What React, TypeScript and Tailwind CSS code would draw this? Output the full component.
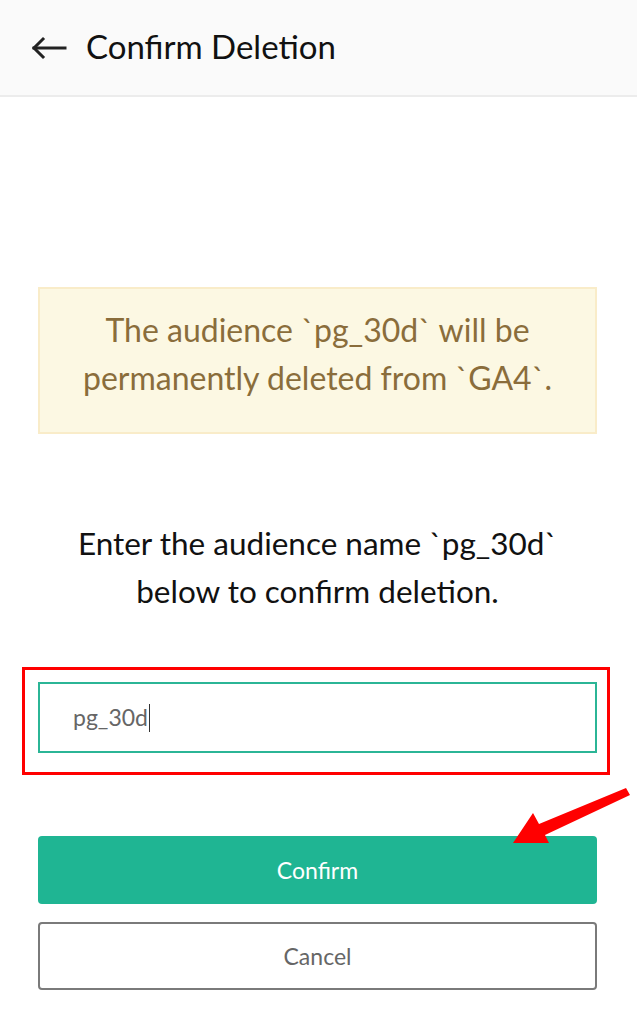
import React from "react";

export default function App() {
  return (
    <div className="relative min-h-[1024px] w-[637px] bg-white" style={{ fontFamily: "Lato, 'Noto Sans', sans-serif" }}>
      <header className="flex h-[97px] items-center border-b-2 border-[#ececec] bg-[#fafafa] pl-[31px]">
        <svg width="36" height="24" viewBox="0 0 36 24" className="mr-[19px]" fill="none" stroke="#222" strokeWidth="3" strokeLinecap="square">
          <path d="M3 12 H34" />
          <path d="M12 3 L3 12 L12 21" strokeLinejoin="miter" />
        </svg>
        <h1 className="mt-[-2px] text-[33px] leading-none text-[#111]">Confirm Deletion</h1>
      </header>

      <main className="pl-[38px] pr-[40px]">
        <div className="mt-[190px] flex h-[147px] items-center justify-center border-2 border-[#f9ecc9] bg-[#fcf8e3] px-4 pb-[14px] text-center text-[32px] leading-[48px] text-[#8a6d3b]">
          <p>
            The audience `pg_30d` will be
            <br />
            permanently deleted from `GA4`.
          </p>
        </div>

        <p className="mt-[85px] text-center text-[31.5px] leading-[48px] text-[#111]">
          Enter the audience name `pg_30d`
          <br />
          below to confirm deletion.
        </p>

        <div className="ml-[-16px] mr-[-13px] mt-[52px] border-[3px] border-[#ff0000] pb-[19px] pl-[13px] pr-[10px] pt-[12px]">
          <div className="flex h-[71px] items-center border-2 border-[#2bb596] pl-[33px] text-[23px] text-[#666]">
            <span>pg_30d</span>
            <span className="ml-[1px] h-[28px] w-[1px] bg-[#333]" />
          </div>
        </div>

        <button className="mt-[61px] flex h-[68px] w-full items-center justify-center rounded-[4px] bg-[#1fb593] text-[23px] text-white">
          Confirm
        </button>
        <button className="mt-[18px] flex h-[68px] w-full items-center justify-center rounded-[4px] border-2 border-[#7a7a7a] bg-white text-[23px] text-[#666]">
          Cancel
        </button>
      </main>

      <svg className="pointer-events-none absolute left-0 top-0" width="637" height="1024" viewBox="0 0 637 1024">
        <polygon points="513,843 533,813 539,824 626,788 630,795 545,835 549,843" fill="#ff0000" />
      </svg>
    </div>
  );
}
